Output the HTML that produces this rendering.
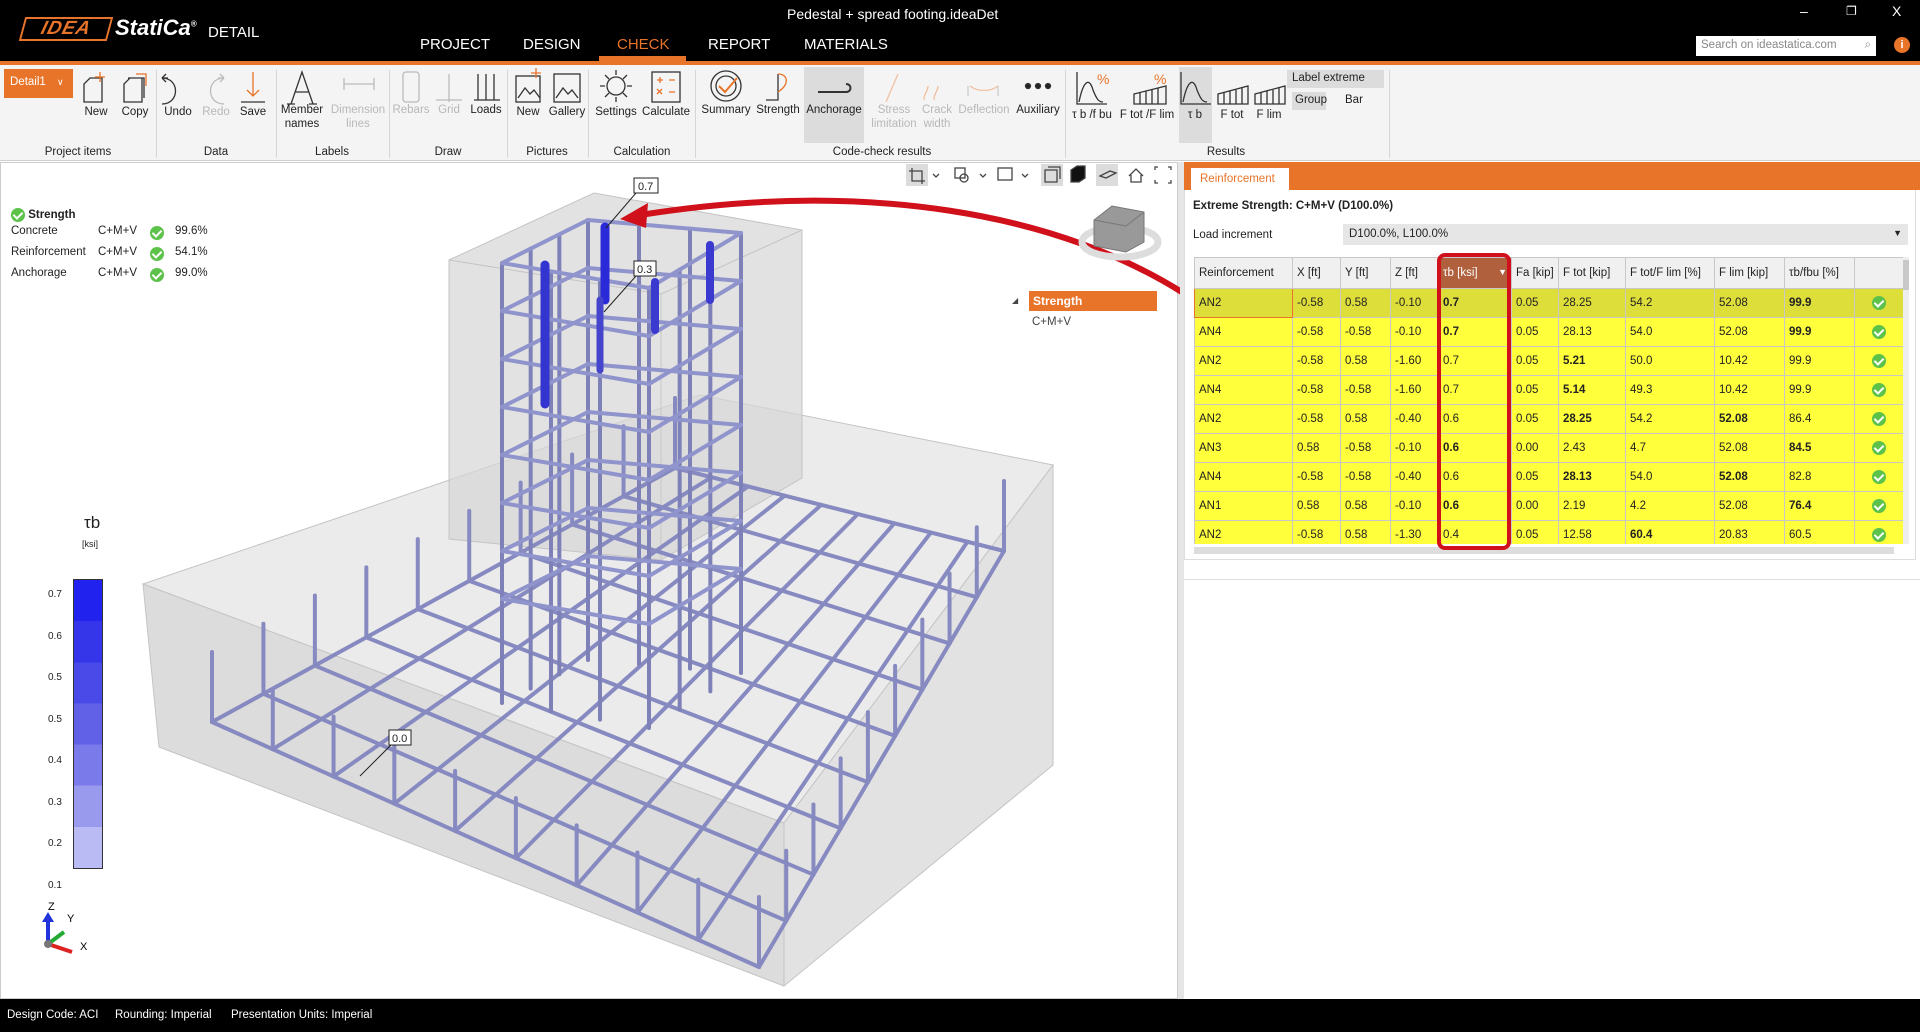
<!DOCTYPE html>
<html><head><meta charset="utf-8"><style>
*{margin:0;padding:0;box-sizing:border-box}
body{width:1920px;height:1032px;overflow:hidden;background:#fff;font-family:"Liberation Sans",sans-serif;position:relative;color:#222}
.a{position:absolute;white-space:nowrap}
#title{left:0;top:0;width:1920px;height:61px;background:#000}
#oline{left:0;top:61px;width:1920px;height:4px;background:#e8742a}
#ribbon{left:0;top:65px;width:1920px;height:96px;background:#f4f4f4;border-bottom:1px solid #cfcfcf}
.tab{top:36px;color:#fff;font-size:15px}
.lbl{font-size:11.5px;color:#222;text-align:center;transform:translateX(-50%);line-height:14px}
.dis{color:#b8b8b8}
.grp{top:146px;font-size:11.5px;color:#222;transform:translateX(-50%)}
.sep{top:70px;width:1px;height:88px;background:#d6d6d6}
.ico{position:absolute}
#status{left:0;top:999px;width:1920px;height:33px;background:#000;color:#fff;font-size:11.5px}
table{border-collapse:collapse;font-size:11.5px;table-layout:fixed}
td,th{border:1px solid #c8c8c8;height:29px;padding:0 4px;text-align:left;font-weight:normal;overflow:hidden}
th{background:#f0f0f0;height:31px;color:#222}
tr.y td{background:#ffff3c}
tr.s td{background:#dede3a}
td b{font-weight:bold}
.ok{display:inline-block;width:14px;height:14px;border-radius:50%;background:#5cc24a;position:relative;vertical-align:middle}
.ok:after{content:"";position:absolute;left:4px;top:2px;width:4px;height:7px;border:solid #fff;border-width:0 2px 2px 0;transform:rotate(45deg)}
</style></head><body>
<div class="a" id="title"></div>
<div class="a" style="left:22px;top:17px;width:88px;height:24px;border:2px solid #e8742a;transform:skewX(-15deg);color:#e8742a;font:italic bold 19px 'Liberation Sans';line-height:20px;text-align:center;letter-spacing:1px">IDEA</div>
<div class="a" style="left:115px;top:15px;color:#fff;font:italic bold 22px 'Liberation Sans'">StatiCa<sup style="font-size:8px">®</sup></div>
<div class="a" style="left:208px;top:24px;color:#fff;font-size:15px">DETAIL</div>
<div class="a" style="left:787px;top:6px;color:#fff;font-size:14px">Pedestal + spread footing.ideaDet</div>
<div class="a tab" style="left:420px">PROJECT</div>
<div class="a tab" style="left:523px">DESIGN</div>
<div class="a tab" style="left:617px;color:#e8742a">CHECK</div>
<div class="a" style="left:599px;top:56px;width:87px;height:5px;background:#e8742a"></div>
<div class="a tab" style="left:708px">REPORT</div>
<div class="a tab" style="left:804px">MATERIALS</div>
<div class="a" style="left:1696px;top:36px;width:180px;height:20px;background:#fff;font-size:11.5px;color:#888;padding:3px 5px">Search on ideastatica.com <span style="float:right">⌕</span></div>
<div class="a" style="left:1894px;top:37px;width:16px;height:16px;border-radius:50%;background:#e8742a;color:#fff;font-size:11px;text-align:center;font-weight:bold;line-height:16px">i</div>
<div class="a" style="left:1800px;top:3px;color:#fff;font-size:14px">–</div>
<div class="a" style="left:1846px;top:4px;color:#fff;font-size:12px">❐</div>
<div class="a" style="left:1892px;top:3px;color:#fff;font-size:14px">X</div>
<div class="a" id="oline"></div>
<div class="a" id="ribbon"></div>
<div class="a" style="left:4px;top:69px;width:69px;height:29px;background:#e8742a;color:#fff;font-size:11.5px;padding:7px 6px">Detail1 <span style="margin-left:8px;font-size:9px">∨</span></div>
<div class="a" style="left:1179px;top:67px;width:33px;height:76px;background:#dcdcdc"></div>
<div class="a" style="left:804px;top:67px;width:60px;height:76px;background:#dcdcdc"></div>
<svg class="ico" style="left:0;top:66px" width="1400" height="46" fill="none" stroke="#333" stroke-width="1.3">
<path d="M84 36V18l6-6h12v24z"/><path d="M100 6v10M95 11h10" stroke="#e8742a"/>
<path d="M124 36V18l6-6h12v24z M128 12h16v20" /><path d="M136 8h10v12" stroke="#e8742a"/>
<path d="M168 12h-6M162 12l4-4M162 12l4 4M162 12c18 0 18 26 0 26" />
<path d="M218 12h6M224 12l-4-4M224 12l-4 4M224 12c-18 0-18 26 0 26" stroke="#bbb"/>
<path d="M253 6v24M247 24l6 6 6-6" stroke="#e8742a"/><path d="M241 36h24"/>
<path d="M291 38l11-32 11 32M295 26h14M287 38h8M309 38h8"/>
<path d="M344 18h30M344 12v12M374 12v12" stroke="#bbb"/>
<rect x="403" y="6" width="16" height="30" rx="3" stroke="#bbb"/>
<path d="M449 8v28M436 34h26" stroke="#bbb"/>
<path d="M478 8v26M486 8v26M494 8v26M474 34h26"/>
<rect x="516" y="10" width="24" height="26"/><path d="M518 32l7-10 5 6 4-4 6 8"/><path d="M536 2v10M531 7h10" stroke="#e8742a"/>
<rect x="554" y="8" width="26" height="28"/><path d="M556 32l7-10 5 6 4-4 6 8"/>
<circle cx="616" cy="20" r="9"/><path d="M616 4v5M616 31v5M600 20h5M627 20h5M605 9l4 4M623 27l4 4M605 31l4-4M623 13l4-4"/>
<rect x="652" y="6" width="28" height="30"/><path d="M657 14h6M660 11v6M669 14h6M657 28l5-5M662 28l-5-5M669 26h6" stroke="#e8742a"/>
<circle cx="726" cy="20" r="15"/><circle cx="726" cy="20" r="10"/><path d="M719 20l6 6 12-14" stroke="#e8742a" stroke-width="2"/>
<path d="M766 34h12V8" /><path d="M778 8c10 0 12 10 0 18" stroke="#e8742a"/>
<path d="M818 26h28c6 0 6-8 0-8" stroke="#333" stroke-width="2"/>
<path d="M886 36l12-28" stroke="#f0c0a0"/><path d="M924 34c0-8 4-8 4-14M934 34c0-8 4-8 4-14" stroke="#f0c0a0"/>
<path d="M970 20c8 6 20 6 28 0" stroke="#f0c0a0"/><path d="M968 20v10M998 20v10" stroke="#ccc"/>
<circle cx="1028" cy="20" r="2.5" fill="#222"/><circle cx="1038" cy="20" r="2.5" fill="#222"/><circle cx="1048" cy="20" r="2.5" fill="#222"/>
<path d="M1077 6v32h30M1079 36c4-20 10-26 14-12c4 10 6 12 10 12"/><text x="1097" y="18" fill="#e8742a" stroke="none" font-size="14" font-family="Liberation Sans">%</text>
<path d="M1134 38v-10l32-8v18zM1140 38v-11M1146 38v-13M1152 38v-14M1158 38v-16"/><text x="1154" y="18" fill="#e8742a" stroke="none" font-size="14" font-family="Liberation Sans">%</text>
<path d="M1181 6v32h30M1183 36c4-20 10-26 14-12c4 10 6 12 10 12"/>
<path d="M1218 38v-10l30-8v18zM1224 38v-11M1230 38v-13M1236 38v-14M1242 38v-16"/>
<path d="M1255 38v-10l30-8v18zM1261 38v-11M1267 38v-13M1273 38v-14M1279 38v-16"/>
</svg>
<div class="a" style="left:1287px;top:70px;width:97px;height:18px;background:#dcdcdc;font-size:11.5px;padding:2px 5px">Label extreme</div>
<div class="a" style="left:1292px;top:92px;width:34px;height:18px;background:#dcdcdc;font-size:11.5px;padding:2px 3px">Group</div>
<div class="a" style="left:1345px;top:94px;font-size:11.5px">Bar</div>
<div class="a lbl" style="left:96px;top:105px">New</div>
<div class="a lbl" style="left:135px;top:105px">Copy</div>
<div class="a lbl" style="left:178px;top:105px">Undo</div>
<div class="a lbl dis" style="left:216px;top:105px">Redo</div>
<div class="a lbl" style="left:253px;top:105px">Save</div>
<div class="a lbl" style="left:302px;top:103px">Member<br>names</div>
<div class="a lbl dis" style="left:358px;top:103px">Dimension<br>lines</div>
<div class="a lbl dis" style="left:411px;top:103px">Rebars</div>
<div class="a lbl dis" style="left:449px;top:103px">Grid</div>
<div class="a lbl" style="left:486px;top:103px">Loads</div>
<div class="a lbl" style="left:528px;top:105px">New</div>
<div class="a lbl" style="left:567px;top:105px">Gallery</div>
<div class="a lbl" style="left:616px;top:105px">Settings</div>
<div class="a lbl" style="left:666px;top:105px">Calculate</div>
<div class="a lbl" style="left:726px;top:103px">Summary</div>
<div class="a lbl" style="left:778px;top:103px">Strength</div>
<div class="a lbl" style="left:834px;top:103px">Anchorage</div>
<div class="a lbl dis" style="left:894px;top:103px">Stress<br>limitation</div>
<div class="a lbl dis" style="left:937px;top:103px">Crack<br>width</div>
<div class="a lbl dis" style="left:984px;top:103px">Deflection</div>
<div class="a lbl" style="left:1038px;top:103px">Auxiliary</div>
<div class="a lbl" style="left:1092px;top:108px">τ b /f bu</div>
<div class="a lbl" style="left:1147px;top:108px">F tot /F lim</div>
<div class="a lbl" style="left:1195px;top:108px">τ b</div>
<div class="a lbl" style="left:1232px;top:108px">F tot</div>
<div class="a lbl" style="left:1269px;top:108px">F lim</div>
<div class="a sep" style="left:156px"></div><div class="a sep" style="left:276px"></div><div class="a sep" style="left:389px"></div><div class="a sep" style="left:507px"></div><div class="a sep" style="left:588px"></div><div class="a sep" style="left:695px"></div><div class="a sep" style="left:1065px"></div><div class="a sep" style="left:1389px"></div>
<div class="a grp" style="left:78px">Project items</div>
<div class="a grp" style="left:216px">Data</div>
<div class="a grp" style="left:332px">Labels</div>
<div class="a grp" style="left:448px">Draw</div>
<div class="a grp" style="left:547px">Pictures</div>
<div class="a grp" style="left:642px">Calculation</div>
<div class="a grp" style="left:882px">Code-check results</div>
<div class="a grp" style="left:1226px">Results</div>

<!-- viewport -->
<div class="a" style="left:0;top:162px;width:1178px;height:837px;background:#fff;border:1px solid #ccc"></div>
<div class="a" style="left:1178px;top:162px;width:6px;height:837px;background:#e6e6e6"></div>
<svg class="a" style="left:0;top:0" width="1180" height="999" id="scene">
<polygon points="143,584 700,395 1053,465 784,823" fill="#ebebeb" stroke="#c4c4c4"/>
<polygon points="143,584 784,823 784,986 159,747" fill="#dcdcdc" stroke="#c4c4c4"/>
<polygon points="784,823 1053,465 1053,765 784,986" fill="#e2e2e2" stroke="#c4c4c4"/>
<polygon points="449,260 594,193 802,230 802,478 661,560 449,539" fill="#d6d6d6" fill-opacity=".7" stroke="#c4c4c4"/>
<polyline points="449,260 661,294 802,230" fill="none" stroke="#c4c4c4"/><line x1="661" y1="294" x2="661" y2="560" stroke="#c8c8c8"/>
<g id="reb" stroke-linecap="round" fill="none"></g>
<g font-size="11" font-family="Liberation Sans" fill="#222">
<line x1="636" y1="193" x2="606" y2="228" stroke="#222"/><rect x="634" y="178" width="24" height="15" fill="#fff" stroke="#222"/><text x="638" y="190">0.7</text>
<line x1="636" y1="276" x2="604" y2="312" stroke="#222"/><rect x="634" y="261" width="22" height="15" fill="#fff" stroke="#222"/><text x="637" y="273">0.3</text>
<line x1="391" y1="745" x2="360" y2="776" stroke="#222"/><rect x="389" y="730" width="22" height="15" fill="#fff" stroke="#222"/><text x="392" y="742">0.0</text>
</g>
<path d="M1194 300 C1060 210 860 180 640 215" fill="none" stroke="#d0101a" stroke-width="6"/>
<polygon points="620,219 648,203 646,228" fill="#d0101a"/>
<g transform="translate(1120,230)"><ellipse cx="0" cy="12" rx="38" ry="15" fill="none" stroke="#ddd" stroke-width="7"/><polygon points="-26,-10 -8,-24 24,-18 24,12 6,22 -26,16" fill="#999" stroke="#777"/><polyline points="-26,-10 6,-4 24,-18 M6,-4 6,22" fill="none" stroke="#777"/></g>
<g fill="none" stroke="#444" stroke-width="1.3">
<rect x="906" y="164" width="22" height="22" fill="#dcdcdc" stroke="none"/><path d="M912 168v13h13M909 171h13v13"/><path d="M933 174l3 3 3-3"/>
<rect x="955" y="168" width="10" height="10"/><circle cx="964" cy="178" r="4"/><path d="M980 174l3 3 3-3"/>
<rect x="998" y="168" width="14" height="12"/><path d="M1022 174l3 3 3-3"/>
<rect x="1041" y="164" width="22" height="22" fill="#dcdcdc" stroke="none"/><path d="M1045 170h12v12h-12zM1048 167h12v12"/>
<path d="M1071 170l6-4h8v12l-6 4h-8z" fill="#111"/>
<rect x="1096" y="164" width="22" height="22" fill="#dcdcdc" stroke="none"/><path d="M1100 176l10-5 6 2-10 5z"/>
<path d="M1129 176l7-7 7 7M1131 175v7h10v-7"/>
<path d="M1155 170v-3h3M1168 167h3v3M1155 180v3h3M1171 180v3h-3"/>
</g>
</svg>
<script>
(function(){
var g=document.getElementById('reb'),ns='http://www.w3.org/2000/svg';
function L(a,b,c,d,w,col){var l=document.createElementNS(ns,'line');l.setAttribute('x1',a);l.setAttribute('y1',b);l.setAttribute('x2',c);l.setAttribute('y2',d);l.setAttribute('stroke',col||'#868ac0');l.setAttribute('stroke-width',w||4);g.appendChild(l);}
var FL=[212,722],F=[759,967],R=[1004,551],B=[675,468];
function P(u,v){var x=(1-u)*(1-v)*FL[0]+u*(1-v)*F[0]+u*v*R[0]+(1-u)*v*B[0];var y=(1-u)*(1-v)*FL[1]+u*(1-v)*F[1]+u*v*R[1]+(1-u)*v*B[1];return [x,y];}
var n=9,i;
for(i=0;i<=n;i++){var t=i/n;var a=P(t,0),b=P(t,1);L(a[0],a[1],b[0],b[1]);var c=P(0,t),d=P(1,t);L(c[0],c[1],d[0],d[1]);}
for(i=0;i<=n;i++){var t=i/n,p=P(0,t);L(p[0],p[1],p[0],p[1]-70);p=P(1,t);L(p[0],p[1],p[0],p[1]-70);p=P(t,0);L(p[0],p[1],p[0],p[1]-60);}
var C=[[502,263],[588,220],[741,233],[649,288]];
for(var j=0;j<4;j++){var p=C[j],q=C[(j+1)%4];for(var s=0;s<3;s++){var t=s/3;var x=p[0]+(q[0]-p[0])*t,y=p[1]+(q[1]-p[1])*t;L(x,y,x,y+440,4,'#7d81b8');}}
for(var k=0;k<8;k++){var dy=k*48;for(var j=0;j<4;j++){var p=C[j],q=C[(j+1)%4];L(p[0],p[1]+dy,q[0],q[1]+dy,4,'#9094cc');}}
L(605,227,605,300,9,'#2a2ad8');L(545,265,545,404,9,'#3434d0');L(710,245,710,300,8,'#3a3ad0');L(655,282,655,330,8,'#3a3ad0');L(600,300,600,370,7,'#4444cc');
})();
</script>
<!-- summary -->
<div class="a" style="left:11px;top:208px;font-size:11.5px"><span class="ok"></span> <b>Strength</b></div>
<div class="a" style="left:11px;top:225px;font-size:11.5px">Concrete</div><div class="a" style="left:98px;top:225px;font-size:11.5px">C+M+V</div><div class="a" style="left:150px;top:224px"><span class="ok"></span></div><div class="a" style="left:175px;top:225px;font-size:11.5px">99.6%</div>
<div class="a" style="left:11px;top:246px;font-size:11.5px">Reinforcement</div><div class="a" style="left:98px;top:246px;font-size:11.5px">C+M+V</div><div class="a" style="left:150px;top:245px"><span class="ok"></span></div><div class="a" style="left:175px;top:246px;font-size:11.5px">54.1%</div>
<div class="a" style="left:11px;top:267px;font-size:11.5px">Anchorage</div><div class="a" style="left:98px;top:267px;font-size:11.5px">C+M+V</div><div class="a" style="left:150px;top:266px"><span class="ok"></span></div><div class="a" style="left:175px;top:267px;font-size:11.5px">99.0%</div>
<div class="a" style="left:1012px;top:296px;font-size:8px;color:#444">◢</div>
<div class="a" style="left:1029px;top:291px;width:128px;height:20px;background:#e8742a;color:#fff;font-weight:bold;font-size:12px;padding:3px 4px">Strength</div>
<div class="a" style="left:1032px;top:316px;font-size:11.5px;color:#444">C+M+V</div>
<!-- legend -->
<div class="a" style="left:84px;top:513px;font-size:17px">τb</div>
<div class="a" style="left:82px;top:539px;font-size:9px">[ksi]</div>
<div class="a" style="left:73px;top:579px;width:30px;height:290px;border:1px solid #333;background:linear-gradient(#2222ee 0 14.3%,#3535ea 14.3% 28.6%,#4a4ae8 28.6% 42.9%,#6161e8 42.9% 57.1%,#7a7aea 57.1% 71.4%,#9999ee 71.4% 85.7%,#babaf4 85.7%)"></div>
<div class="a" style="left:48px;top:574px;font-size:10px;line-height:41.5px">0.7<br>0.6<br>0.5<br>0.5<br>0.4<br>0.3<br>0.2<br>0.1</div>
<svg class="a" style="left:38px;top:900px" width="50" height="60"><text x="10" y="10" font-size="11" font-family="Liberation Sans">Z</text><text x="29" y="22" font-size="11" font-family="Liberation Sans">Y</text><text x="42" y="50" font-size="11" font-family="Liberation Sans">X</text><path d="M10 44V18" stroke="#2233dd" stroke-width="4"/><path d="M4 22l6-10 6 10z" fill="#2233dd"/><path d="M10 44l16-12" stroke="#22aa33" stroke-width="4"/><path d="M10 44l24 8" stroke="#dd2222" stroke-width="4"/><circle cx="10" cy="44" r="4" fill="#777"/></svg>
<!-- right panel -->
<div class="a" style="left:1184px;top:162px;width:736px;height:837px;background:#fff"></div>
<div class="a" style="left:1184px;top:162px;width:736px;height:28px;background:#e8742a"></div>
<div class="a" style="left:1191px;top:168px;width:98px;height:22px;background:#fff;color:#e8742a;font-size:11.5px;padding:5px 0 0 9px">Reinforcement</div>
<div class="a" style="left:1184px;top:190px;width:732px;height:370px;border:1px solid #ddd;border-top:none"></div>
<div class="a" style="left:1193px;top:200px;font-size:11.5px;font-weight:bold">Extreme Strength: C+M+V (D100.0%)</div>
<div class="a" style="left:1193px;top:229px;font-size:11.5px">Load increment</div>
<div class="a" style="left:1343px;top:224px;width:565px;height:21px;background:#e6e6e6;font-size:11.5px;padding:4px 6px">D100.0%, L100.0%<span style="float:right;font-size:9px">▼</span></div>
<div class="a" style="left:1194px;top:257px;width:709px;height:287px;overflow:hidden">
<table style="width:709px">
<colgroup><col style="width:98px"><col style="width:48px"><col style="width:50px"><col style="width:48px"><col style="width:73px"><col style="width:47px"><col style="width:67px"><col style="width:89px"><col style="width:70px"><col style="width:70px"><col style="width:49px"></colgroup>
<tr><th>Reinforcement</th><th>X [ft]</th><th>Y [ft]</th><th>Z [ft]</th><th style="background:#b0603c;color:#fff">τb [ksi] <span style="font-size:9px;float:right">▼</span></th><th>Fa [kip]</th><th>F tot [kip]</th><th>F tot/F lim [%]</th><th>F lim [kip]</th><th>τb/fbu [%]</th><th></th></tr>
<tr class="s"><td style="border:1px solid #e8742a">AN2</td><td>-0.58</td><td>0.58</td><td>-0.10</td><td><b>0.7</b></td><td>0.05</td><td>28.25</td><td>54.2</td><td>52.08</td><td><b>99.9</b></td><td style="text-align:center"><span class="ok"></span></td></tr>
<tr class="y"><td>AN4</td><td>-0.58</td><td>-0.58</td><td>-0.10</td><td><b>0.7</b></td><td>0.05</td><td>28.13</td><td>54.0</td><td>52.08</td><td><b>99.9</b></td><td style="text-align:center"><span class="ok"></span></td></tr>
<tr class="y"><td>AN2</td><td>-0.58</td><td>0.58</td><td>-1.60</td><td>0.7</td><td>0.05</td><td><b>5.21</b></td><td>50.0</td><td>10.42</td><td>99.9</td><td style="text-align:center"><span class="ok"></span></td></tr>
<tr class="y"><td>AN4</td><td>-0.58</td><td>-0.58</td><td>-1.60</td><td>0.7</td><td>0.05</td><td><b>5.14</b></td><td>49.3</td><td>10.42</td><td>99.9</td><td style="text-align:center"><span class="ok"></span></td></tr>
<tr class="y"><td>AN2</td><td>-0.58</td><td>0.58</td><td>-0.40</td><td>0.6</td><td>0.05</td><td><b>28.25</b></td><td>54.2</td><td><b>52.08</b></td><td>86.4</td><td style="text-align:center"><span class="ok"></span></td></tr>
<tr class="y"><td>AN3</td><td>0.58</td><td>-0.58</td><td>-0.10</td><td><b>0.6</b></td><td>0.00</td><td>2.43</td><td>4.7</td><td>52.08</td><td><b>84.5</b></td><td style="text-align:center"><span class="ok"></span></td></tr>
<tr class="y"><td>AN4</td><td>-0.58</td><td>-0.58</td><td>-0.40</td><td>0.6</td><td>0.05</td><td><b>28.13</b></td><td>54.0</td><td><b>52.08</b></td><td>82.8</td><td style="text-align:center"><span class="ok"></span></td></tr>
<tr class="y"><td>AN1</td><td>0.58</td><td>0.58</td><td>-0.10</td><td><b>0.6</b></td><td>0.00</td><td>2.19</td><td>4.2</td><td>52.08</td><td><b>76.4</b></td><td style="text-align:center"><span class="ok"></span></td></tr>
<tr class="y"><td>AN2</td><td>-0.58</td><td>0.58</td><td>-1.30</td><td>0.4</td><td>0.05</td><td>12.58</td><td><b>60.4</b></td><td>20.83</td><td>60.5</td><td style="text-align:center"><span class="ok"></span></td></tr>
</table></div>
<div class="a" style="left:1903px;top:257px;width:6px;height:287px;background:#eee"></div><div class="a" style="left:1903px;top:260px;width:6px;height:30px;background:#c8c8c8"></div>
<div class="a" style="left:1194px;top:547px;width:700px;height:7px;background:#ddd"></div>
<div class="a" style="left:1437px;top:253px;width:74px;height:297px;border:4px solid #d0101a;border-radius:8px"></div>
<div class="a" style="left:1184px;top:579px;width:736px;height:1px;background:#ddd"></div>
<div class="a" id="status"><span class="a" style="left:7px;top:10px">Design Code: ACI</span><span class="a" style="left:115px;top:10px">Rounding: Imperial</span><span class="a" style="left:231px;top:10px">Presentation Units: Imperial</span></div>
</body></html>
